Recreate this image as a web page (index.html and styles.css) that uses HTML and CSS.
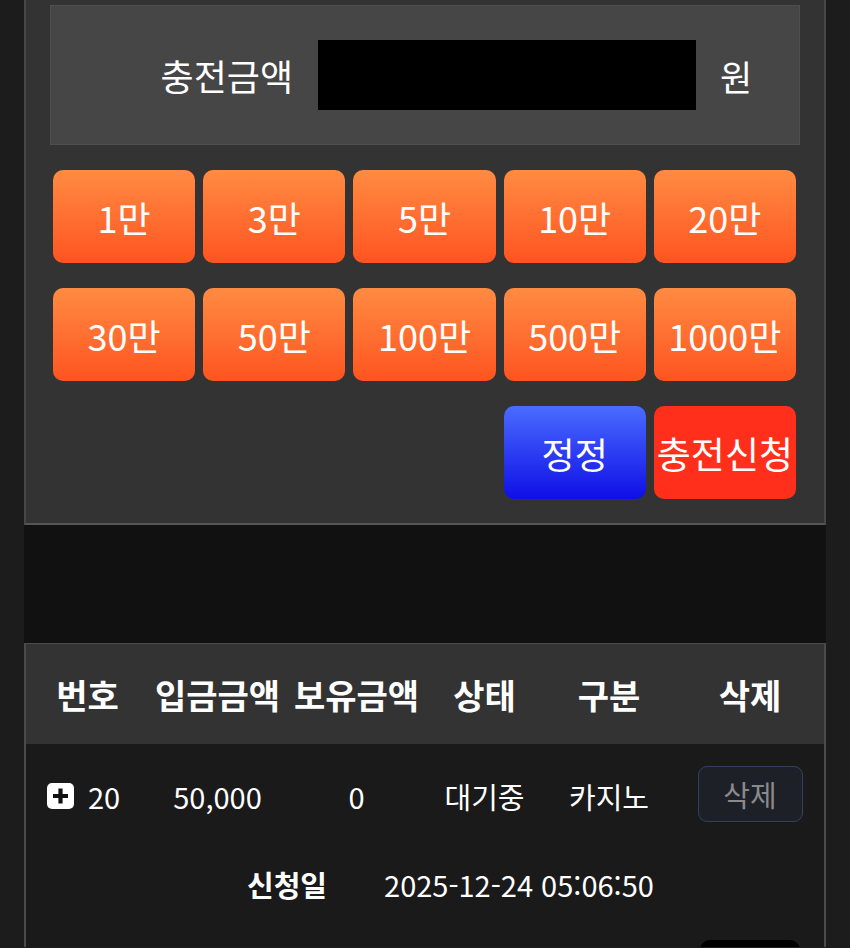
FILE: index.html
```html
<!DOCTYPE html>
<html lang="ko">
<head>
  <meta charset="UTF-8">
  <meta name="viewport" content="width=device-width, initial-scale=1.0">
  <title>충전신청</title>
  <link rel="stylesheet" href="styles.css">
</head>
<body>
  <div class="page">
    <!-- 충전 신청 패널 -->
    <div class="charge-panel">
      <div class="amount-box">
        <span class="amount-label">충전금액</span>
        <div class="amount-input"></div>
        <span class="amount-unit">원</span>
      </div>

      <div class="quick-grid">
        <button class="btn btn-quick">1만</button>
        <button class="btn btn-quick">3만</button>
        <button class="btn btn-quick">5만</button>
        <button class="btn btn-quick">10만</button>
        <button class="btn btn-quick">20만</button>
        <button class="btn btn-quick">30만</button>
        <button class="btn btn-quick">50만</button>
        <button class="btn btn-quick">100만</button>
        <button class="btn btn-quick">500만</button>
        <button class="btn btn-quick">1000만</button>
        <button class="btn btn-reset">정정</button>
        <button class="btn btn-submit">충전신청</button>
      </div>
    </div>

    <div class="spacer"></div>

    <!-- 신청 내역 -->
    <div class="history">
      <div class="history-head">
        <span>번호</span>
        <span>입금금액</span>
        <span>보유금액</span>
        <span>상태</span>
        <span>구분</span>
        <span>삭제</span>
      </div>
      <div class="history-row">
        <span class="cell-no">
          <svg class="plus-icon" viewBox="0 0 27 26" width="27" height="26">
            <rect x="0" y="0" width="27" height="26" rx="5" fill="#fff"/>
            <path d="M13.5 5.5v15M6 13h15" stroke="#111" stroke-width="4.2"/>
          </svg>
          20
        </span>
        <span>50,000</span>
        <span>0</span>
        <span>대기중</span>
        <span>카지노</span>
        <span><button class="btn-delete">삭제</button></span>
      </div>
      <div class="history-detail">
        <span class="detail-label">신청일</span>
        <span>2025-12-24 05:06:50</span>
      </div>
      <div class="history-more">
        <span class="more-btn"></span>
      </div>
    </div>
  </div>
</body>
</html>
```

FILE: styles.css
```css
/* Base */
body {
  margin: 0;
  padding: 0;
  background: #1c1c1c;
  color: #fff;
  font-family: "Noto Sans CJK KR", "Noto Sans", sans-serif;
  height: 948px;
  overflow: hidden;
}
.page {
  margin: 0 24px;
}
/* Charge panel */
.charge-panel {
  background: #333;
  border-left: 2px solid #474747;
  border-right: 2px solid #474747;
  border-bottom: 2px solid #555;
  padding: 5px 24px 24px;
}
.amount-box {
  display: flex;
  align-items: center;
  height: 140px;
  box-sizing: border-box;
  background: #464646;
  border: 1px solid #4f4f4f;
}
.amount-label {
  width: 242px;
  text-align: right;
  font-size: 36px;
  line-height: 1;
}
.amount-input {
  width: 378px;
  height: 70px;
  margin: 0 24px 0 25px;
  background: #000;
}
.amount-unit {
  font-size: 35px;
  line-height: 1;
}
.quick-grid {
  display: grid;
  grid-template-columns: repeat(5, 1fr);
  gap: 25px 8px;
  margin: 25px 4px 0 3px;
}
.btn {
  height: 93px;
  border: none;
  border-radius: 10px;
  color: #fff;
  font-family: inherit;
  font-size: 36px;
  padding: 0;
  white-space: nowrap;
}
.btn-quick {
  background: linear-gradient(#ff8b42, #ff5420);
}
.btn-reset {
  grid-column: 4;
  background: linear-gradient(#4a6cff, #0f0fe6);
}
.btn-submit {
  background: #ff2f1b;
  font-size: 37px;
}
.spacer {
  height: 118px;
  background: #111;
}
/* History table */
.history {
  background: #1a1a1a;
  border-top: 1px solid #4a4a4a;
  border-left: 2px solid #4a4a4a;
  border-right: 2px solid #4a4a4a;
  height: 303px;
  overflow: hidden;
}
.history-head,
.history-row {
  display: grid;
  grid-template-columns: 123px 137px 141px 115px 134px 1fr;
  align-items: center;
  text-align: center;
}
.history-head {
  height: 100px;
  background: #333;
  font-size: 34px;
  font-weight: bold;
}
.history-row {
  height: 104px;
  font-size: 29px;
}
.cell-no {
  display: flex;
  align-items: center;
  gap: 14px;
  padding-left: 21px;
}
.plus-icon {
  display: block;
}
.btn-delete {
  width: 105px;
  height: 56px;
  margin-top: -4px;
  background: #1e2028;
  border: 1px solid #35415c;
  border-radius: 9px;
  color: #8a8a8a;
  font-family: inherit;
  font-size: 29px;
  padding: 0;
}
.history-detail {
  display: flex;
  align-items: center;
  height: 72px;
  padding-left: 221px;
  gap: 57px;
  font-size: 29px;
}
.detail-label {
  font-weight: bold;
}
.history-more {
  display: flex;
  justify-content: flex-end;
  padding: 20px 24px 0 0;
}
.more-btn {
  width: 100px;
  height: 40px;
  background: #000;
  border-radius: 10px;
}
```
